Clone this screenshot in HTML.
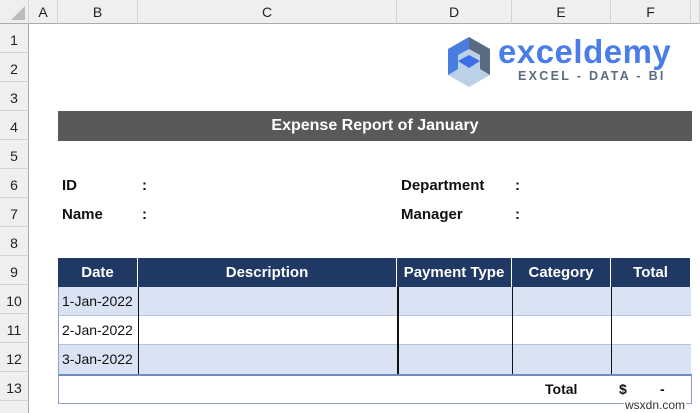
<!DOCTYPE html><html><head><style>
*{margin:0;padding:0;box-sizing:border-box}
html,body{width:700px;height:413px;overflow:hidden}
body{background:#fff;font-family:"Liberation Sans",Calibri,sans-serif;position:relative}
.a{position:absolute}
.ch{top:0;height:24px;background:#efefef;border-bottom:1px solid #ababab;border-right:1px solid #d4d4d4;text-align:center;font-size:14px;line-height:24px;color:#222}
.rh{left:0;width:29px;background:#efefef;border-right:1px solid #ababab;border-bottom:1px solid #d4d4d4;text-align:center;font-size:14px;color:#222;height:29px;padding-top:8px}
.b{font-weight:bold;font-size:15px;color:#111}
.th{top:258px;height:29px;background:#1f3864;color:#fff;font-weight:bold;font-size:15px;text-align:center;line-height:29px;border-right:1px solid #fff}
.cell{height:29px;font-size:14px;line-height:29px;color:#111}
</style></head><body>
<div class="a ch" style="left:0;width:29px"><div class="a" style="right:3px;bottom:3px;width:0;height:0;border-left:14px solid transparent;border-bottom:14px solid #bbb"></div></div>
<div class="a ch" style="left:29px;width:29px">A</div>
<div class="a ch" style="left:58px;width:80px">B</div>
<div class="a ch" style="left:138px;width:259px">C</div>
<div class="a ch" style="left:397px;width:115px">D</div>
<div class="a ch" style="left:512px;width:99px">E</div>
<div class="a ch" style="left:611px;width:80px">F</div>
<div class="a ch" style="left:691px;width:9px"></div>
<div class="a rh" style="top:24px">1</div><div class="a rh" style="top:53px">2</div><div class="a rh" style="top:82px">3</div><div class="a rh" style="top:111px">4</div><div class="a rh" style="top:140px">5</div><div class="a rh" style="top:169px">6</div><div class="a rh" style="top:198px">7</div><div class="a rh" style="top:227px">8</div><div class="a rh" style="top:256px">9</div><div class="a rh" style="top:285px">10</div><div class="a rh" style="top:314px">11</div><div class="a rh" style="top:343px">12</div><div class="a rh" style="top:372px">13</div><div class="a rh" style="top:401px"></div>
<svg class="a" style="left:444px;top:35px" width="50" height="55" viewBox="0 0 50 55">
<polygon points="25,2 46,14 46,40 25,52 4,40 4,14" fill="#bcd0e6"/>
<polygon points="25,2 4,14 4,40 14,34 14,20 25,14" fill="#4a7de0"/>
<polygon points="25,2 46,14 46,40 36,34 36,20 25,14" fill="#5a6b82"/>
<polygon points="14,26 25,20 36,26 25,33" fill="#3b6fe8"/>
</svg>
<div class="a" style="left:498px;top:33px;font-size:33px;font-weight:bold;color:#4a7de8;letter-spacing:0.5px">exceldemy</div>
<div class="a" style="left:518px;top:69px;font-size:12.5px;font-weight:bold;color:#5a6b82;letter-spacing:2.3px">EXCEL - DATA - BI</div>
<div class="a" style="left:58px;top:111px;width:634px;height:30px;background:#595959;color:#fff;font-weight:bold;font-size:16px;text-align:center;line-height:30px">Expense Report of January</div>
<div class="a b" style="left:62px;top:177px">ID</div><div class="a b" style="left:142px;top:177px">:</div>
<div class="a b" style="left:62px;top:206px">Name</div><div class="a b" style="left:142px;top:206px">:</div>
<div class="a b" style="left:401px;top:177px">Department</div><div class="a b" style="left:515px;top:177px">:</div>
<div class="a b" style="left:401px;top:206px">Manager</div><div class="a b" style="left:515px;top:206px">:</div>
<div class="a th" style="left:58px;width:80px">Date</div>
<div class="a th" style="left:138px;width:259px">Description</div>
<div class="a th" style="left:397px;width:115px">Payment Type</div>
<div class="a th" style="left:512px;width:99px">Category</div>
<div class="a th" style="left:611px;width:80px">Total</div>
<div class="a" style="left:58px;top:287px;width:633px;height:29px;background:#dae3f3;border-bottom:1px solid #b4c3e0"></div>
<div class="a" style="left:58px;top:316px;width:633px;height:29px;background:#fff;border-bottom:1px solid #b4c3e0"></div>
<div class="a" style="left:58px;top:345px;width:633px;height:29px;background:#dae3f3"></div>
<div class="a" style="left:58px;top:287px;width:1px;height:87px;background:#8aa0c8"></div>
<div class="a" style="left:138px;top:287px;width:1px;height:87px;background:#111"></div>
<div class="a" style="left:397px;top:287px;width:2px;height:87px;background:#111"></div>
<div class="a" style="left:512px;top:287px;width:1px;height:87px;background:#111"></div>
<div class="a" style="left:611px;top:287px;width:1px;height:87px;background:#111"></div>
<div class="a cell" style="left:62px;top:287px">1-Jan-2022</div>
<div class="a cell" style="left:62px;top:316px">2-Jan-2022</div>
<div class="a cell" style="left:62px;top:345px">3-Jan-2022</div>
<div class="a" style="left:58px;top:374px;width:634px;height:30px;border:1px solid #8aa0c8;border-top:2px solid #6d8cc4"></div>
<div class="a b" style="left:545px;top:381px;font-size:14px">Total</div>
<div class="a b" style="left:619px;top:381px;font-size:14px">$</div>
<div class="a b" style="left:660px;top:381px;font-size:14px">-</div>
<div class="a" style="left:624px;top:398px;font-size:12px;line-height:14px;color:#333;background:#fff;padding:0 1px">wsxdn.com</div>
</body></html>
